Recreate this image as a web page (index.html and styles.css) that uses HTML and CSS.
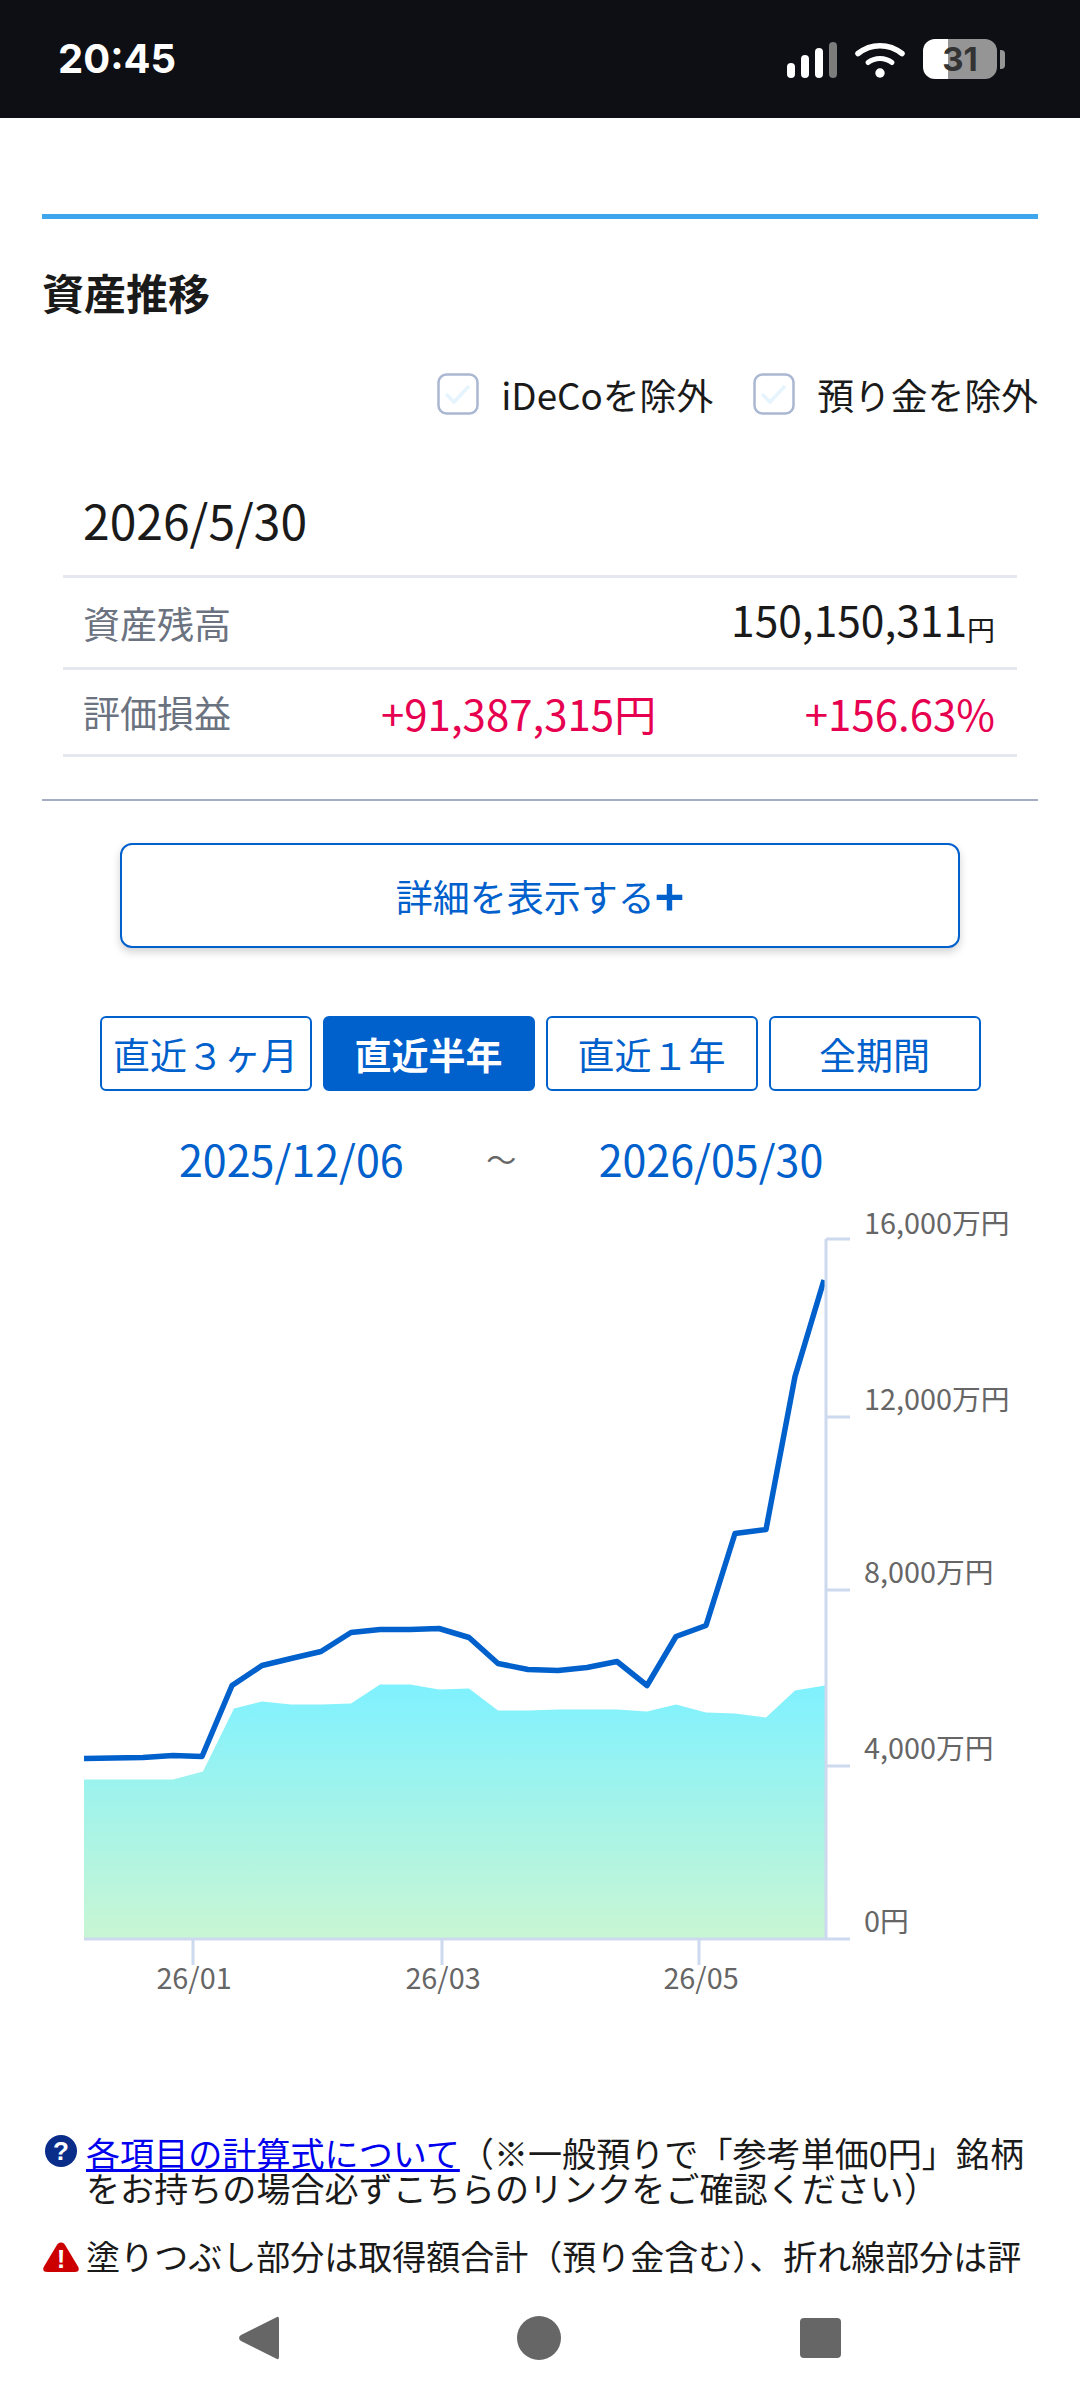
FILE: index.html
```html
<!DOCTYPE html>
<html lang="ja">
<head>
<meta charset="utf-8">
<title>資産推移</title>
<link rel="stylesheet" href="styles.css">
</head>
<body>
<div class="phone">
  <header class="status">
    <span class="time">20:45</span>
    <div class="status-icons">
      <svg class="signal" width="50" height="36" viewBox="0 0 50 36"><rect x="0" y="21" width="8" height="15" rx="4" fill="#fff"/><rect x="14" y="13" width="8" height="23" rx="4" fill="#fff"/><rect x="28" y="6" width="8" height="30" rx="4" fill="#fff"/><rect x="42" y="0" width="8" height="36" rx="4" fill="#7c7c7c"/></svg>
      <svg class="wifi" width="50" height="36" viewBox="0 0 50 36"><path d="M3 11.5C16 1 34 1 47 11.5" fill="none" stroke="#fff" stroke-width="5.5" stroke-linecap="round"/><path d="M13 20.5C20 15 30 15 37 20.5" fill="none" stroke="#fff" stroke-width="5" stroke-linecap="round"/><circle cx="25" cy="31" r="4.7" fill="#fff"/></svg>
      <div class="battery"><span>31</span></div>
    </div>
  </header>

  <main class="content">
    <div class="rule-top"></div>
    <h1 class="title">資産推移</h1>
    <div class="filters">
      <label class="filter"><svg class="check" width="42" height="42" viewBox="0 0 42 42"><rect x="1.5" y="1.5" width="39" height="39" rx="8" fill="#fff" stroke="#aab7d1" stroke-width="2.5"/><path d="M9 21l8 8 15-16" fill="none" stroke="#e6f4fe" stroke-width="3.5"/></svg>iDeCoを除外</label>
      <label class="filter"><svg class="check" width="42" height="42" viewBox="0 0 42 42"><rect x="1.5" y="1.5" width="39" height="39" rx="8" fill="#fff" stroke="#aab7d1" stroke-width="2.5"/><path d="M9 21l8 8 15-16" fill="none" stroke="#e6f4fe" stroke-width="3.5"/></svg>預り金を除外</label>
    </div>

    <section class="summary">
      <div class="summary-date">2026/5/30</div>
      <div class="summary-row row-balance">
        <span class="row-label">資産残高</span>
        <span class="row-value"><span class="row-amount">150,150,311</span><small class="yen">円</small></span>
      </div>
      <div class="summary-row row-gain">
        <span class="row-label">評価損益</span>
        <span class="row-gain-yen">+91,387,315円</span>
        <span class="row-gain-pct">+156.63%</span>
      </div>
    </section>

    <div class="rule-thin"></div>

    <button class="detail-btn">詳細を表示する<b class="plus">+</b></button>

    <nav class="tabs">
      <span class="tab">直近３ヶ月</span>
      <span class="tab tab-active">直近半年</span>
      <span class="tab">直近１年</span>
      <span class="tab">全期間</span>
    </nav>

    <div class="range">
      <span class="range-date">2025/12/06</span>
      <span class="range-sep">～</span>
      <span class="range-date">2026/05/30</span>
    </div>

    <svg class="chart" width="1080" height="800" viewBox="0 1200 1080 800">
      <defs>
        <linearGradient id="areaFill" x1="0" y1="0" x2="0" y2="1">
          <stop offset="0" stop-color="#7ff1ff"/>
          <stop offset="1" stop-color="#c9f6d3"/>
        </linearGradient>
      </defs>
      <polygon fill="url(#areaFill)" points="84,1938 84,1778.500 113,1778.500 143,1778.500 173,1778.500 203,1770.500 234,1707.500 262,1700.500 291,1703.500 321,1703.500 351,1702.500 380,1683.500 410,1683.500 439,1688.500 469,1687.500 498,1709.500 528,1709.500 558,1708.500 587,1708.500 617,1708.500 647,1710.500 676,1703.500 706,1711.500 735,1712.500 766,1716.500 795,1689.500 825,1684.500 825,1938"/>
      <polyline fill="none" stroke="#0060cc" stroke-width="5.5" stroke-linejoin="round" points="84,1757.500 113,1757 143,1756.500 173,1754.500 202,1755.500 232,1684.500 262,1664.500 291,1657.500 321,1650.500 351,1631.500 380,1628.500 410,1628.500 439,1627.500 469,1636.500 498,1662.500 528,1668.500 558,1669.500 587,1666.500 617,1660.500 647,1684.500 676,1635.500 706,1624.500 735,1532.500 766,1528.500 795,1375.500 824,1279"/>
      <g class="axis">
        <path d="M84 1938H850M826 1238V1938M826 1238H850M826 1416H850M826 1589H850M826 1765H850M193 1938V1964M442 1938V1964M699 1938V1964"/>
      </g>
      <g class="tick-labels">
        <text x="864" y="1233">16,000万円</text>
        <text x="864" y="1409">12,000万円</text>
        <text x="864" y="1582">8,000万円</text>
        <text x="864" y="1758">4,000万円</text>
        <text x="864" y="1931">0円</text>
      </g>
      <g class="tick-labels tick-x">
        <text x="194" y="1988">26/01</text>
        <text x="443" y="1988">26/03</text>
        <text x="701" y="1988">26/05</text>
      </g>
    </svg>

    <div class="notes">
      <p class="note">
        <svg class="note-icon" width="32" height="32" viewBox="0 0 32 32"><circle cx="16" cy="16" r="16" fill="#0b2d8a"/><text class="glyph" x="16" y="25" text-anchor="middle">?</text></svg>
        <span><a class="note-link" href="#">各項目の計算式について</a>（※一般預りで「参考単価0円」銘柄をお持ちの場合必ずこちらのリンクをご確認ください）</span>
      </p>
      <p class="note note-warn">
        <svg class="note-icon" width="38" height="32" viewBox="0 0 38 32"><path d="M19 1.5C16.5 1.5 15.5 3 14 5.5L2 25.5C.5 28 1 31 5 31H33C37 31 37.500 28 36 25.500L24 5.500C22.500 3 21.500 1.500 19 1.500Z" fill="#cc0000"/><text class="glyph" x="19" y="27" text-anchor="middle">!</text></svg>
        <span>塗りつぶし部分は取得額合計（預り金含む）、折れ線部分は評</span>
      </p>
    </div>
  </main>

  <footer class="navbar">
    <svg width="40" height="44" viewBox="0 0 40 44"><path d="M37 1.500C39 0 40 1 40 3.500V40.500C40 43 39 44 37 42.500L2 25C-.5 23.500 -.5 20.500 2 19Z" fill="#666"/></svg>
    <span class="nav-circle"></span>
    <span class="nav-square"></span>
  </footer>
</div>
</body>
</html>
```
FILE: styles.css
```css
* { box-sizing: border-box; }
html, body { margin: 0; padding: 0; background: #fff; }
body { font-family: "Noto Sans CJK JP", "Noto Sans", sans-serif; color: #1a1a1a; }
.phone { width: 1080px; height: 2400px; display: flex; flex-direction: column; overflow: hidden; }

.status { height: 118px; flex: none; background: #0d0f14; display: flex; align-items: flex-start; justify-content: space-between; padding: 39px 83px 0 58px; }
.time { font-family: Inter, Roboto, sans-serif; font-weight: 700; font-size: 40px; line-height: 40px; color: #fff; }
.status-icons { display: flex; align-items: center; }
.signal { margin-top: 2px; }
.wifi { margin-left: 18px; margin-top: 2px; }
.battery { position: relative; width: 74px; height: 40px; margin-left: 18px; border-radius: 12px; background: linear-gradient(90deg, #fff 25px, #959595 25px); display: flex; align-items: center; justify-content: center; }
.battery::after { content: ""; position: absolute; left: 77px; top: 11px; width: 5px; height: 19px; border-radius: 0 4px 4px 0; background: #959595; }
.battery span { font-family: Inter, Roboto, sans-serif; font-weight: 700; font-size: 33px; line-height: 40px; color: #333; }

.content { flex: 1; min-height: 0; overflow: hidden; padding: 0 42px; }
.rule-top { height: 5px; margin-top: 96px; background: #3ea6ec; }
.title { margin: 43px 0 0; font-size: 42px; line-height: 60px; font-weight: 700; }
.filters { display: flex; justify-content: flex-end; gap: 40px; margin-top: 47px; height: 50px; }
.filter { display: flex; align-items: center; gap: 22px; font-size: 36.8px; line-height: 50px; }
.check { flex: none; }

.summary { padding: 0 21px; }
.summary-date { padding: 70px 0 26px 20px; font-size: 48px; line-height: 60px; border-bottom: 3px solid #e5e8ee; }
.summary-row { display: flex; align-items: center; justify-content: space-between; padding: 0 22px 0 20px; border-bottom: 3px solid #e5e8ee; }
.row-balance { height: 92px; }
.row-gain { height: 87px; }
.row-label { font-size: 37px; color: #6b7280; width: 298px; }
.row-value { font-size: 42.5px; }
.row-amount { position: relative; top: -4px; }
.yen { font-size: 28px; }
.row-gain-yen, .row-gain-pct { font-size: 42px; color: #e6004f; }
.row-gain-pct { margin-left: auto; }

.rule-thin { height: 2px; margin-top: 42px; background: #a3aec4; }
.detail-btn { display: flex; align-items: center; justify-content: center; width: 840px; height: 105px; margin: 42px auto 0; padding: 0; background: #fff; border: 2.5px solid #0060cc; border-radius: 12px; box-shadow: 0 4px 8px rgba(0, 0, 0, .18); font-family: inherit; font-size: 37px; line-height: 50px; color: #0060cc; }
.plus { font-weight: 700; font-size: 50px; line-height: 50px; margin-top: -3px; }

.tabs { display: flex; justify-content: center; gap: 11px; margin-top: 68px; }
.tab { width: 212px; height: 75px; display: flex; align-items: center; justify-content: center; border: 2.5px solid #0060cc; border-radius: 6px; font-size: 37px; color: #0060cc; }
.tab-active { background: #0060cc; color: #fff; font-weight: 700; }

.range { display: flex; align-items: center; height: 60px; margin-top: 37px; padding-left: 137px; font-size: 43px; color: #0060cc; }
.range-date { line-height: 60px; }
.range-sep { width: 195px; text-align: center; font-size: 30px; color: #666; }

.chart { display: block; margin: 13px 0 0 -42px; }
.axis path { fill: none; stroke: #cdd9ee; stroke-width: 3; }
.tick-labels text { font-size: 28.8px; fill: #666; }
.tick-x text { text-anchor: middle; }

.notes { margin-top: 134px; }
.note { position: relative; margin: 0; padding-left: 44px; font-size: 34.1px; line-height: 35px; color: #1a1a1a; }
.note-warn { margin-top: 33px; font-size: 34px; }
.note-icon { position: absolute; left: 3px; top: 0; }
.note-warn .note-icon { left: 0; top: 3px; }
.note-link { color: #0000ee; text-decoration: underline; }
.glyph { font-family: "Liberation Sans", sans-serif; font-weight: 700; font-size: 26px; fill: #fff; }

.navbar { height: 120px; flex: none; background: #fff; position: relative; }
.navbar svg { position: absolute; left: 239px; top: 36px; }
.nav-circle { width: 44px; height: 44px; border-radius: 50%; background: #666; position: absolute; left: 517px; top: 36px; }
.nav-square { width: 41px; height: 40px; border-radius: 4px; background: #666; position: absolute; left: 800px; top: 38px; }
```
